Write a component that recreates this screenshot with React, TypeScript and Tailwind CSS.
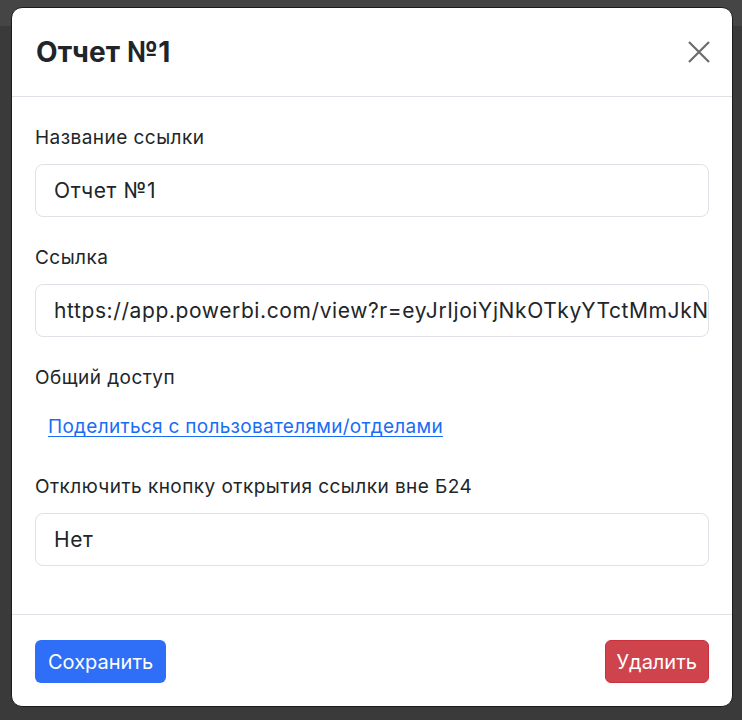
import React from 'react';

const font = { fontFamily: 'Inter, "Noto Sans", sans-serif' };

function Field({ label, value, mb = 'mb-[29px]' }: { label: string; value: string; mb?: string }) {
  return (
    <div className={mb}>
      <div className="mb-[14px] text-[19px] leading-[24px] tracking-[0.45px] text-[#212529]">{label}</div>
      <div className="flex h-[53px] items-center overflow-hidden whitespace-nowrap rounded-[8px] border border-[#dee2e6] pl-[18px] text-[21px] tracking-[0.6px] text-[#212529]">
        {value}
      </div>
    </div>
  );
}

export default function App() {
  return (
    <div
      className="h-[720px] w-[742px] overflow-hidden bg-[linear-gradient(to_bottom,#454545_26px,#3a3a3a_26px)] pl-[11px] pt-[7px]"
      style={font}
    >
      <div className="flex h-[700px] w-[722px] flex-col rounded-[11px] border border-[#1c1c1c] bg-white">
        <div className="flex h-[89px] items-center justify-between border-b border-[#dee2e6] pl-[24px] pr-[20px]">
          <h1 className="text-[28px] font-bold tracking-[0.2px] text-[#212529]">Отчет №1</h1>
          <button className="flex h-[26px] w-[26px] items-center justify-center">
            <svg width="22" height="22" viewBox="0 0 22 22" fill="none" stroke="#6c6c6c" strokeWidth="2.2">
              <path d="M1 1L21 21M21 1L1 21" />
            </svg>
          </button>
        </div>

        <div className="flex-1 px-[23px] pt-[29px]">
          <Field label="Название ссылки" value="Отчет №1" />
          <Field
            label="Ссылка"
            value="https://app.powerbi.com/view?r=eyJrIjoiYjNkOTkyYTctMmJkNzQ4Ni1hZjQ1LWE2"
          />
          <div className="text-[19px] leading-[24px] tracking-[0.45px] text-[#212529]">Общий доступ</div>
          <div className="mt-[23px] mb-[34px] pl-[13px] text-[19px] leading-[28px] tracking-[0.3px]">
            <a className="text-[#1a6cf5] underline underline-offset-[3px]" href="#">
              Поделиться с пользователями/отделами
            </a>
          </div>
          <Field label="Отключить кнопку открытия ссылки вне Б24" value="Нет" mb="mb-0" />
        </div>

        <div className="flex items-center justify-between border-t border-[#dee2e6] px-[23px] pb-[23px] pt-[25px]">
          <button className="h-[43px] rounded-[6px] bg-[#2f6ef6] px-[13px] text-[20px] text-white">
            Сохранить
          </button>
          <button className="h-[43px] rounded-[6px] border border-[#c9323c] bg-[#cf444c] px-[11px] text-[20px] text-white">
            Удалить
          </button>
        </div>
      </div>
    </div>
  );
}
